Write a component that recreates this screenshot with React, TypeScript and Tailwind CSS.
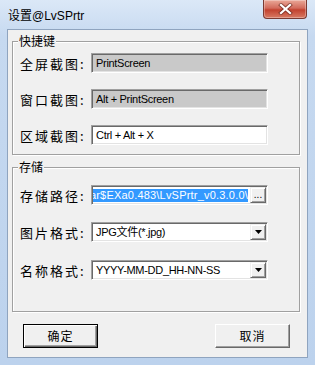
import type { ReactNode } from "react";

const cjk = "font-['Noto_Sans_CJK_SC',sans-serif]";
const latin = "font-['Liberation_Sans','Noto_Sans_CJK_SC',sans-serif]";

const sunken =
  "border border-t-[#a0a0a0] border-l-[#a0a0a0] border-b-white border-r-white shadow-[inset_1px_1px_0_#696969,inset_-1px_-1px_0_#e3e3e3]";
const raised =
  "bg-[#f0f0f0] border border-t-[#f0f0f0] border-l-[#f0f0f0] border-b-[#696969] border-r-[#696969] shadow-[inset_1px_1px_0_#fff,inset_-1px_-1px_0_#a0a0a0]";

function SmallBtn({ children }: { children: ReactNode }) {
  return <div className={`w-[16px] h-[16px] shrink-0 flex items-center justify-center ${raised}`}>{children}</div>;
}

function Arrow() {
  return (
    <svg width="7" height="4" viewBox="0 0 7 4">
      <path d="M0 0 H7 L3.5 4 Z" fill="#000" />
    </svg>
  );
}

function Row({ label, children }: { label: string; children: ReactNode }) {
  return (
    <div className="h-[20px] flex items-center">
      <div className={`w-[71px] shrink-0 whitespace-nowrap text-[13px] leading-[15px] tracking-[2px] text-black ${cjk}`}>
        {label}
      </div>
      {children}
    </div>
  );
}

function TextBox({ value, disabled }: { value: string; disabled?: boolean }) {
  return (
    <div
      className={`w-[177px] h-[20px] flex items-center pl-[4px] ${sunken} ${disabled ? "bg-[#c9c9c9]" : "bg-white"}`}
    >
      <span className={`text-[11px] tracking-[-0.3px] leading-[13px] text-black whitespace-nowrap ${latin}`}>{value}</span>
    </div>
  );
}

function Combo({ value }: { value: string }) {
  return (
    <div className={`w-[177px] h-[20px] flex items-center p-[1px] bg-white ${sunken}`}>
      <div className={`flex-1 pl-[3px] text-[11px] tracking-[-0.3px] leading-[13px] text-black whitespace-nowrap ${latin}`}>
        {value}
      </div>
      <SmallBtn>
        <Arrow />
      </SmallBtn>
    </div>
  );
}

function Group({ title, className, children }: { title: string; className: string; children: ReactNode }) {
  return (
    <fieldset
      className={`ml-[4px] w-[288px] px-[7px] border border-[#a0a0a0] shadow-[inset_1px_1px_0_#fff,1px_1px_0_#fff] ${className}`}
    >
      <legend className={`ml-[-2px] px-[1px] bg-[#f0f0f0] text-[12px] leading-[14px] text-black ${cjk}`}>{title}</legend>
      {children}
    </fieldset>
  );
}

export default function App() {
  return (
    <div className="w-[315px] h-[365px] flex flex-col bg-[linear-gradient(#dbe8f7,#c6d9f0_10%,#bcd2ed)] select-none">
      {/* title bar */}
      <div className="h-[29px] flex items-start justify-between pl-[8px]">
        <div className={`mt-[7px] text-[12px] leading-[16px] text-black ${cjk}`}>
          设置<span className={latin}>@LvSPrtr</span>
        </div>
        <div className="w-[44px] h-[19px] mr-[8px] rounded-b-[4px] border border-t-0 border-[#7a3a32] bg-[linear-gradient(#eaa898,#d26b5c_45%,#c2422f_55%,#d87a63)] shadow-[inset_0_0_0_1px_rgba(255,255,255,0.3)] flex items-center justify-center">
          <svg width="15" height="12" viewBox="0 0 15 12">
            <path d="M3 2 L12 10 M12 2 L3 10" stroke="#5a2018" strokeWidth="4" strokeLinecap="square" opacity="0.6" />
            <path d="M3 2 L12 10 M12 2 L3 10" stroke="#fff" strokeWidth="2.2" strokeLinecap="square" />
          </svg>
        </div>
      </div>

      {/* client area */}
      <div className="mx-[7px] h-[329px] border border-[#8fa4bf] bg-[#f0f0f0] flex flex-col">
        <Group title="快捷键" className="mt-[4px]">
          <div className="flex flex-col gap-[16px] pt-[5px] pb-[9px]">
            <Row label="全屏截图:">
              <TextBox value="PrintScreen" disabled />
            </Row>
            <Row label="窗口截图:">
              <TextBox value="Alt + PrintScreen" disabled />
            </Row>
            <Row label="区域截图:">
              <TextBox value="Ctrl + Alt + X" />
            </Row>
          </div>
        </Group>

        <Group title="存储" className="mt-[5px]">
          <div className="flex flex-col pt-[11px] pb-[31px]">
            <Row label="存储路径:">
              <div className={`w-[177px] h-[20px] flex items-center p-[1px] bg-white ${sunken}`}>
                <div className="flex-1 overflow-hidden flex justify-end pr-[2px]">
                  <span
                    className={`bg-[#3399ff] text-white text-[11px] tracking-[0.2px] leading-[13px] whitespace-nowrap ${latin}`}
                  >
                    Rar$EXa0.483\LvSPrtr_v0.3.0.0\
                  </span>
                </div>
                <SmallBtn>
                  <span className={`text-[10px] leading-[8px] text-black ${latin}`}>...</span>
                </SmallBtn>
              </div>
            </Row>
            <div className="h-[17px]" />
            <Row label="图片格式:">
              <Combo value="JPG文件(*.jpg)" />
            </Row>
            <div className="h-[18px]" />
            <Row label="名称格式:">
              <Combo value="YYYY-MM-DD_HH-NN-SS" />
            </Row>
          </div>
        </Group>

        <div className="mt-[12px] flex justify-between pl-[15px] pr-[17px]">
          <button
            className={`w-[75px] h-[24px] border border-black bg-[#f0f0f0] shadow-[inset_1px_1px_0_#fff,inset_-1px_-1px_0_#696969,inset_-2px_-2px_0_#a0a0a0] text-[12px] tracking-[1px] text-black ${cjk}`}
          >
            确定
          </button>
          <button
            className={`w-[75px] h-[24px] border border-t-white border-l-white border-b-[#696969] border-r-[#696969] bg-[#f0f0f0] shadow-[inset_-1px_-1px_0_#a0a0a0] text-[12px] tracking-[1px] text-black ${cjk}`}
          >
            取消
          </button>
        </div>
      </div>
    </div>
  );
}
